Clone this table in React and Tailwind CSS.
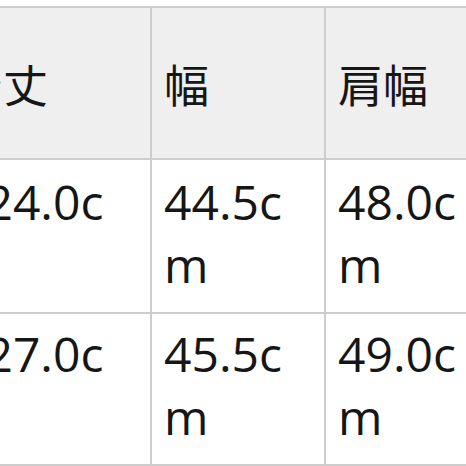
import React from 'react';

const headers = ["着丈", "幅", "肩幅"];
const rows = [
    { h: "h-[154px] pt-[10px]", cells: ["124.0cm", "44.5cm", "48.0cm"] },
    { h: "h-[152px] pt-[8px]", cells: ["127.0cm", "45.5cm", "49.0cm"] },
];

const App = () => {
    return (
        <div className="w-[466px] h-[466px] overflow-hidden bg-white font-['Open_Sans','Noto_Sans_CJK_JP',sans-serif] text-[#161616] text-[48px] leading-[63px]">
            <div className="grid grid-cols-[206px_174px_174px] w-max ml-[-54px] mt-[6px] border-t-2 border-[#cdcdcd]">
                {headers.map((h) => (
                    <div key={h} className="h-[152px] flex items-center px-3 bg-[#efefef] border-r-2 border-b-2 border-[#cdcdcd]">
                        <span className="text-[45px] font-['Noto_Sans_CJK_JP',sans-serif]">{h}</span>
                    </div>
                ))}
                {rows.map((row, i) =>
                    row.cells.map((c, j) => (
                        <div key={`${i}-${j}`} className={`${row.h} px-3 bg-white break-all border-r-2 border-b-2 border-[#cdcdcd]`}>
                            {c}
                        </div>
                    ))
                )}
            </div>
        </div>
    );
};

export default App;
